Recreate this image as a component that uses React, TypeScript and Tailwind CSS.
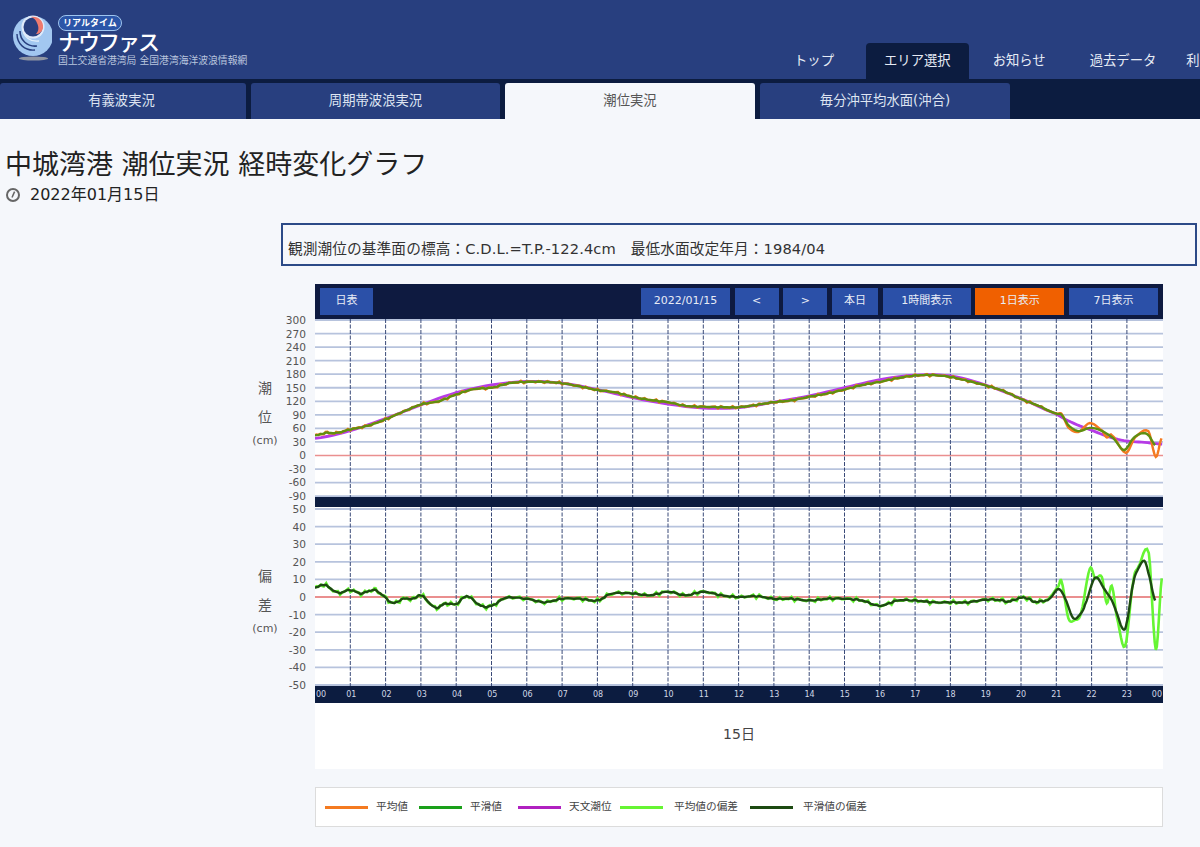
type Pt = [number, number];

const HOUR = 35.3;

const tideBase: Pt[] = [
  [0, 44], [0.3, 50], [0.6, 50], [1, 58], [1.5, 66], [2, 80], [2.5, 97], [3, 113], [3.5, 120], [4, 135],
  [4.5, 147], [5, 150], [5.5, 160], [6, 163], [6.5, 163], [7, 160], [7.5, 153], [8, 145], [8.5, 140],
  [9, 130], [9.5, 123], [10, 118], [10.5, 110], [11, 108], [11.5, 107], [12, 107], [12.5, 112], [13, 118],
  [13.5, 122], [14, 130], [14.5, 137], [15, 146], [15.5, 156], [16, 163], [16.5, 171], [17, 177],
  [17.5, 178], [18, 174], [18.5, 165], [19, 155], [19.5, 143], [20, 125], [20.5, 110], [21, 93],
];
const tideSmooth: Pt[] = [
  ...tideBase,
  [21.15, 90], [21.34, 67], [21.62, 54], [21.95, 61], [22.24, 56], [22.62, 38], [22.92, 12], [23.18, 38],
  [23.42, 49], [23.61, 45], [23.8, 23],
];
const tideAvg: Pt[] = [
  ...tideBase,
  [21.15, 92], [21.34, 62], [21.62, 52], [21.95, 72], [22.3, 55], [22.43, 40], [22.57, 45], [22.97, 6],
  [23.23, 40], [23.61, 54], [23.82, -3], [23.98, 38],
];
const tideAstro: Pt[] = [
  [0, 38], [1, 55], [2, 82], [3, 112], [4, 139], [5, 156], [6, 164], [7, 160], [8, 146], [9, 128], [10, 114],
  [11, 105], [12, 106], [13, 118], [14, 132], [15, 150], [16, 168], [17, 178], [18, 176], [19, 156], [20, 126],
  [21, 92], [21.5, 71], [22, 56], [22.5, 41], [23, 32], [23.5, 29], [24, 25],
];

const devBase: Pt[] = [
  [0, 5], [0.25, 7], [0.65, 2.4], [1, 4], [1.3, 2], [1.65, 4], [1.85, 2], [2.2, -3.4], [2.5, -1], [2.8, -1],
  [3, 1], [3.4, -6], [3.7, -3.7], [4, -4], [4.3, 0.5], [4.7, -5], [5, -5], [5.4, -0.5], [6, -1], [6.5, -3],
  [7, -1], [7.5, -1], [8, -2], [8.4, 2], [9, 2], [9.5, 1], [10, 3], [10.5, 1], [11, 3], [11.5, 1], [12, 0],
  [12.5, 0.5], [13, -1], [13.5, -1], [14, -2], [14.5, -1], [15, -1], [15.5, -2], [16, -5], [16.5, -2], [17, -2],
  [17.5, -3], [18, -3], [18.5, -3], [19, -1.5], [19.4, -1.7], [19.64, -2.6], [20, -0.4], [20.2, -0.8],
  [20.35, -2.6], [20.63, -2.3],
];
const devSmooth: Pt[] = [
  ...devBase,
  [20.82, -0.8], [21.06, 4.5], [21.25, -0.8], [21.48, -12], [21.67, -10], [21.81, -4.5], [22.1, 11], [22.38, 4],
  [22.57, -1.7], [22.71, -9], [22.88, -18], [22.99, -15], [23.18, 8], [23.32, 16], [23.49, 20.6], [23.61, 13.5],
  [23.8, -2],
];
const devAvg: Pt[] = [
  ...devBase,
  [20.82, 0], [21.06, 6], [21.15, 8.7], [21.34, -12], [21.53, -13], [21.7, -9], [21.95, 16], [22.1, 10.6],
  [22.29, 11.5], [22.43, -3.6], [22.57, 6.4], [22.71, -11], [22.95, -28], [23.18, 9], [23.32, 17], [23.62, 25],
  [23.82, -30], [23.99, 10.6],
];

// catmull-rom sampling, noise only before the stormy part at the end
function series(pts: Pt[], toY: (v: number) => number, noise = 0) {
  let d = "";
  for (let i = 0; i < pts.length - 1; i++) {
    const p0 = pts[Math.max(i - 1, 0)][1];
    const p1 = pts[i][1];
    const p2 = pts[i + 1][1];
    const p3 = pts[Math.min(i + 2, pts.length - 1)][1];
    for (let s = 0; s < 6; s++) {
      const t = s / 6;
      const h = pts[i][0] + (pts[i + 1][0] - pts[i][0]) * t;
      let v = 0.5 * (2 * p1 + (p2 - p0) * t + (2 * p0 - 5 * p1 + 4 * p2 - p3) * t * t + (3 * p1 - p0 - 3 * p2 + p3) * t * t * t);
      if (h < 20.8) v += noise * (Math.sin(h * 23) + Math.sin(h * 41 + 1));
      d += `${d ? "L" : "M"}${(h * HOUR).toFixed(1)} ${toY(v).toFixed(1)}`;
    }
  }
  const last = pts[pts.length - 1];
  return `${d}L${(last[0] * HOUR).toFixed(1)} ${toY(last[1]).toFixed(1)}`;
}

const tideY = (v: number) => 136.5 - v * 0.4517;
const devY = (v: number) => 90 - v * 1.76;

const tideTicks = [300, 270, 240, 210, 180, 150, 120, 90, 60, 30, 0, -30, -60, -90];
const devTicks = [50, 40, 30, 20, 10, 0, -10, -20, -30, -40, -50];
const hours = Array.from({ length: 23 }, (_, i) => i + 1);

function Grid({ ticks, toY, height, zero }: { ticks: number[]; toY: (v: number) => number; height: number; zero: number }) {
  return (
    <>
      {ticks.map((t) =>
        t === 0 ? null : <line key={t} x1="0" x2="848" y1={toY(t)} y2={toY(t)} stroke="#b7c3dd" strokeWidth="1.8" />
      )}
      <line x1="0" x2="848" y1={toY(0)} y2={toY(0)} stroke="#ea8f8f" strokeWidth={zero} />
      {hours.map((h) => (
        <line key={h} x1={h * HOUR} x2={h * HOUR} y1="0" y2={height} stroke="#3a4a78" strokeWidth="1" strokeDasharray="4 1.5" />
      ))}
    </>
  );
}

function Ticks({ ticks }: { ticks: number[] }) {
  return (
    <div className="flex h-[176px] w-[59px] flex-col justify-between pr-[9px] text-[10.6px] text-[#555]">
      {ticks.map((t) => (
        <div key={t} className="flex h-0 items-center justify-end">{t}</div>
      ))}
    </div>
  );
}

function AxisLabel({ a, b }: { a: string; b: string }) {
  return (
    <div className="absolute left-0 top-[55px] flex w-[36px] flex-col items-center text-[#555]">
      <span className="text-[14px] leading-[29px]">{a}</span>
      <span className="text-[14px] leading-[29px]">{b}</span>
      <span className="text-[11px] leading-[17px]">(cm)</span>
    </div>
  );
}

function Logo() {
  return (
    <svg width="42" height="48" viewBox="10 14 42 48" className="mt-[14px] ml-[10px] shrink-0">
      <circle cx="33" cy="36" r="20" fill="#a2c7f0" />
      <path d="M17 34C17 44 25 51 35 50" fill="none" stroke="#283f7f" strokeWidth="1.4" />
      <path d="M20 31C20 40 27 47 37 46" fill="none" stroke="#283f7f" strokeWidth="1.6" />
      <path d="M23 30C24 37 30 42 39 41" fill="none" stroke="#e4effb" strokeWidth="1.4" />
      <circle cx="33" cy="27" r="11.5" fill="#dfeafa" />
      <circle cx="33" cy="27" r="9.5" fill="#283f7f" />
      <path d="M31 17C38 16 44 21 43 28C42 32 39 34 36 34C39 31 39 27 37 23C36 20 34 18 31 17Z" fill="#ee7a6e" />
      <ellipse cx="33.5" cy="58.5" rx="14.5" ry="2" fill="#8f95a3" />
    </svg>
  );
}

const navItems = [
  { label: "トップ", cls: "ml-[776px] px-[18px]" },
  { label: "エリア選択", cls: "ml-[14px] px-[18px] bg-[#0c1c40] rounded-t-[4px]" },
  { label: "お知らせ", cls: "ml-[6px] px-[18px]" },
  { label: "過去データ", cls: "ml-[8px] px-[18px]" },
  { label: "利用案内", cls: "ml-[-6px] px-[18px]" },
];

const tabs = [
  { label: "有義波実況", cls: "w-[246px] pr-[3px] bg-[#283f7f] text-[#dfe5f2]" },
  { label: "周期帯波浪実況", cls: "w-[249px] bg-[#283f7f] text-[#dfe5f2]" },
  { label: "潮位実況", cls: "w-[250px] bg-[#f5f7fb] text-[#555]" },
  { label: "毎分沖平均水面(沖合)", cls: "w-[250px] bg-[#283f7f] text-[#dfe5f2]" },
];

const toolButtons = [
  { label: "2022/01/15", cls: "w-[89px] bg-[#2b50a8]" },
  { label: "<", cls: "w-[44px] bg-[#2b50a8]" },
  { label: ">", cls: "w-[44px] bg-[#2b50a8]" },
  { label: "本日", cls: "w-[46px] bg-[#2b50a8]" },
  { label: "1時間表示", cls: "w-[88px] bg-[#2b50a8]" },
  { label: "1日表示", cls: "w-[89px] bg-[#f06000]" },
  { label: "7日表示", cls: "w-[89px] bg-[#2b50a8]" },
];

const legend = [
  { label: "平均値", color: "bg-[#f47a20]", cls: "w-[94px]", gap: "ml-[8px]" },
  { label: "平滑値", color: "bg-[#1aa01a]", cls: "w-[99px]", gap: "ml-[8px]" },
  { label: "天文潮位", color: "bg-[#b020c0]", cls: "w-[102px]", gap: "ml-[8px]" },
  { label: "平均値の偏差", color: "bg-[#66f533]", cls: "w-[130px]", gap: "ml-[11px]" },
  { label: "平滑値の偏差", color: "bg-[#1d4a12]", cls: "w-[130px]", gap: "ml-[10px]" },
];

export default function App() {
  return (
    <div className="h-[847px] w-[1200px] overflow-hidden bg-[#f5f7fb] font-['DejaVu_Sans','Noto_Sans_CJK_JP',sans-serif] text-[#222]">
      <header className="relative h-[79px] overflow-hidden bg-[#283f7f]">
        <div className="flex">
          <Logo />
          <div className="ml-[6px] mt-[15px] flex flex-col items-start text-white">
            <span className="rounded-full border border-[#9fc5ef] bg-[#2b55a8] px-[4px] text-[9px] font-bold leading-[14px]">リアルタイム</span>
            <span className="mt-[1px] text-[22px] font-medium leading-[22px] tracking-[-2px]">ナウファス</span>
            <span className="mt-[1px] whitespace-nowrap text-[9.8px] leading-[12px] text-[#b9c5de]">国土交通省港湾局 全国港湾海洋波浪情報網</span>
          </div>
        </div>
        <nav className="absolute bottom-0 left-0 flex w-[1300px] text-[13.33px] leading-[36px] text-[#e6ebf5]">
          {navItems.map((n) => (
            <span key={n.label} className={`${n.cls} shrink-0 whitespace-nowrap`}>{n.label}</span>
          ))}
        </nav>
      </header>

      <div className="flex h-[40px] items-end gap-[5px] bg-[#0c1c40] pt-[4px]">
        {tabs.map((t) => (
          <div key={t.label} className={`${t.cls} flex h-[36px] items-center justify-center rounded-t-[3px] text-[13.33px]`}>{t.label}</div>
        ))}
      </div>

      <h1 className="ml-[5px] mt-[28px] whitespace-nowrap text-[27px] leading-[36px] text-[#222]">中城湾港 潮位実況 経時変化グラフ</h1>
      <div className="ml-[6px] flex items-center text-[16px] leading-[24px]">
        <svg width="14" height="14" viewBox="0 0 14 14">
          <circle cx="7" cy="7" r="6" fill="none" stroke="#666" strokeWidth="2" />
          <path d="M6 9.5L8.6 3.6" stroke="#666" strokeWidth="1.5" />
        </svg>
        <span className="ml-[10px]">2022年01月15日</span>
      </div>

      <div className="ml-[281px] mt-[16px] flex h-[43px] w-[916px] items-center border-2 border-[#2c4a87] pl-[5px] pt-[9px] text-[14.67px] tracking-[0.11px] text-[#333]">
        観測潮位の基準面の標高：C.D.L.=T.P.-122.4cm　最低水面改定年月：1984/04
      </div>

      <section className="ml-[247px] mt-[18px] w-[916px]">
        <div className="ml-[68px] flex h-[35px] items-center bg-[#0e1a40] px-[5px] text-[11px] text-[#e8ecf6]">
          <span className="flex h-[27px] w-[53px] items-center justify-center bg-[#2b50a8]">日表</span>
          <div className="ml-auto flex gap-[4.67px]">
            {toolButtons.map((b) => (
              <span key={b.label} className={`${b.cls} flex h-[27px] items-center justify-center`}>{b.label}</span>
            ))}
          </div>
        </div>

        <div className="relative flex">
          <AxisLabel a="潮" b="位" />
          <div className="ml-[9px] pt-[2px]"><Ticks ticks={tideTicks} /></div>
          <svg width="848" height="178" className="block bg-white">
            <Grid ticks={tideTicks} toY={tideY} height={178} zero={1.3} />
            <path d={series(tideAstro, tideY)} fill="none" stroke="#b63be6" strokeWidth="2.8" />
            <path d={series(tideAvg, tideY, 1.6)} fill="none" stroke="#f47a20" strokeWidth="2.4" />
            <path d={series(tideSmooth, tideY, 0.5)} fill="none" stroke="#5f8f10" strokeWidth="2.4" />
          </svg>
        </div>

        <div className="ml-[68px] h-[10px] bg-[#0c1c40]" />

        <div className="relative flex">
          <AxisLabel a="偏" b="差" />
          <div className="ml-[9px] pt-[3px]"><Ticks ticks={devTicks} /></div>
          <svg width="848" height="179" className="block bg-white">
            <Grid ticks={devTicks} toY={devY} height={179} zero={1.8} />
            <path d={series(devAvg, devY, 0.7)} fill="none" stroke="#66f533" strokeWidth="2.6" />
            <path d={series(devSmooth, devY, 0.2)} fill="none" stroke="#1d4a12" strokeWidth="2.4" />
          </svg>
        </div>

        <div className="ml-[68px] flex h-[17px] items-center justify-between bg-[#0c1c40] text-[8px] text-[#d0d7e6]">
          <span className="ml-[1px] flex w-0 justify-start">00</span>
          {hours.map((h) => (
            <span key={h} className="flex w-0 justify-center">{String(h).padStart(2, "0")}</span>
          ))}
          <span className="mr-[1px] flex w-0 justify-end">00</span>
        </div>

        <div className="ml-[68px] flex h-[66px] items-center justify-center bg-white pb-[4px] text-[14px] text-[#444]">15日</div>

        <div className="ml-[68px] mt-[18px] flex h-[40px] items-center border border-[#dcdcdc] bg-white pl-[9px] text-[10.67px] text-[#444]">
          {legend.map((l) => (
            <div key={l.label} className={`${l.cls} flex shrink-0 items-center`}>
              <span className={`${l.color} h-[3px] w-[43px]`} />
              <span className={l.gap}>{l.label}</span>
            </div>
          ))}
        </div>
      </section>
    </div>
  );
}
